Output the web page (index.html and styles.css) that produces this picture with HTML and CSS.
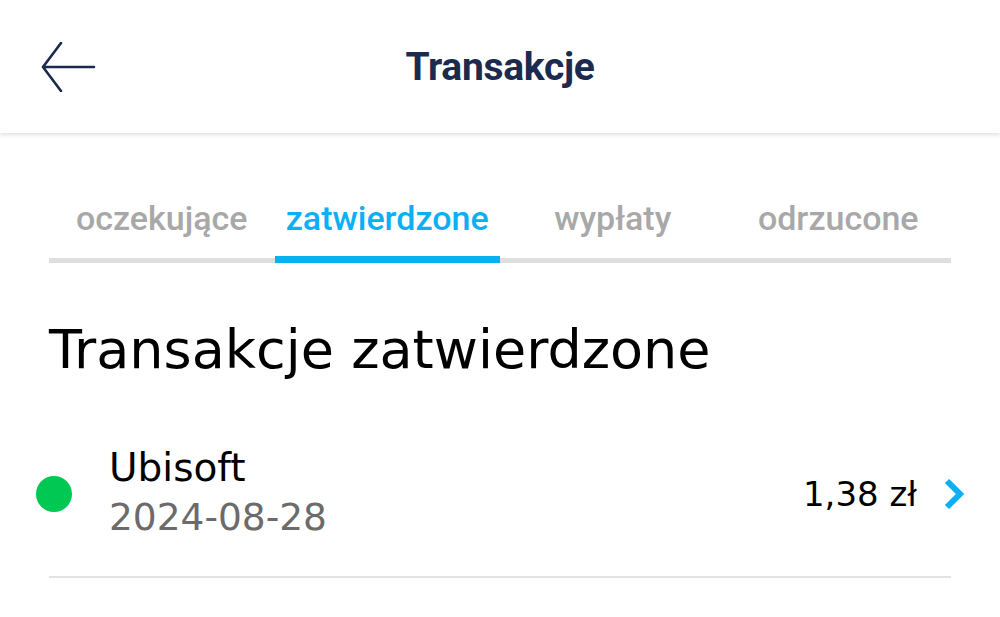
FILE: index.html
```html
<!DOCTYPE html>
<html lang="pl">
<head>
<meta charset="utf-8">
<link rel="stylesheet" href="styles.css">
</head>
<body>
<header class="topbar">
  <button class="back" aria-label="Wstecz">
    <svg width="56" height="50" viewBox="0 0 56 50"><path d="M54 25H3M21 1L3 25L21 49" fill="none" stroke="#1c2a4f" stroke-width="2.6" stroke-linejoin="round" stroke-linecap="round"/></svg>
  </button>
  <h1 class="title">Transakcje</h1>
  <span class="spacer"></span>
</header>
<main class="content">
  <nav class="tabs">
    <a class="tab">oczekujące</a>
    <a class="tab active">zatwierdzone</a>
    <a class="tab">wypłaty</a>
    <a class="tab">odrzucone</a>
  </nav>
  <h2 class="heading">Transakcje zatwierdzone</h2>
  <ul class="list">
    <li class="row">
      <span class="dot"></span>
      <div class="info">
        <div class="name">Ubisoft</div>
        <div class="date">2024-08-28</div>
      </div>
      <div class="amount">1,38 zł</div>
      <svg class="chev" width="22" height="32" viewBox="0 0 22 32"><path d="M4 3L17 16L4 29" fill="none" stroke="#0ab0f3" stroke-width="6"/></svg>
    </li>
  </ul>
</main>
</body>
</html>
```
FILE: styles.css
```css
* { box-sizing: border-box; }
html, body { margin: 0; padding: 0; background: #fff; }
body { font-family: "DejaVu Sans", sans-serif; color: #000; }

.topbar {
  height: 133px;
  display: flex;
  align-items: center;
  padding: 0 40px;
  background: #fff;
  box-shadow: 0 2px 4px rgba(0,0,0,0.12);
  position: relative;
}
.back { border: 0; background: none; padding: 0; width: 56px; height: 50px; display: flex; }
.title {
  flex: 1;
  text-align: center;
  margin: 0;
  font-family: Roboto, sans-serif;
  font-weight: 700;
  font-size: 39px;
  letter-spacing: -0.3px;
  color: #1b2a4e;
}
.spacer { width: 56px; }

.content { padding: 0 49px; }

.tabs {
  display: grid;
  grid-template-columns: repeat(4, 1fr);
  margin-top: 63px;
  border-bottom: 5px solid #dedede;
}
.tab {
  text-align: center;
  font-family: Roboto, sans-serif;
  font-weight: 500;
  font-size: 34px;
  color: #a8a8a8;
  height: 62px;
  line-height: 44px;
  position: relative;
}
.tab.active { color: #0ab0f3; }
.tab.active::after {
  content: "";
  position: absolute;
  left: 0; right: 0; bottom: -5px;
  height: 7px;
  background: #0ab0f3;
}

.heading {
  margin: 52px 0 0;
  font-weight: 400;
  font-size: 54px;
  line-height: 70px;
}

.list { list-style: none; margin: 60px 0 0; padding: 0; }
.row {
  display: flex;
  align-items: center;
  border-bottom: 2px solid #e3e3e3;
  padding: 0 0 33px;
}
.dot { width: 36px; height: 36px; border-radius: 50%; background: #00c853; margin-left: -13px; margin-right: 37px; }
.info { flex: 1; }
.name { font-size: 39px; line-height: 46px; font-weight: 500; }
.date { font-size: 37.5px; line-height: 52px; color: #6b6b6b; }
.amount { font-size: 34px; font-weight: 500; margin-right: 26px; }
.chev { margin-right: -14px; }
```
